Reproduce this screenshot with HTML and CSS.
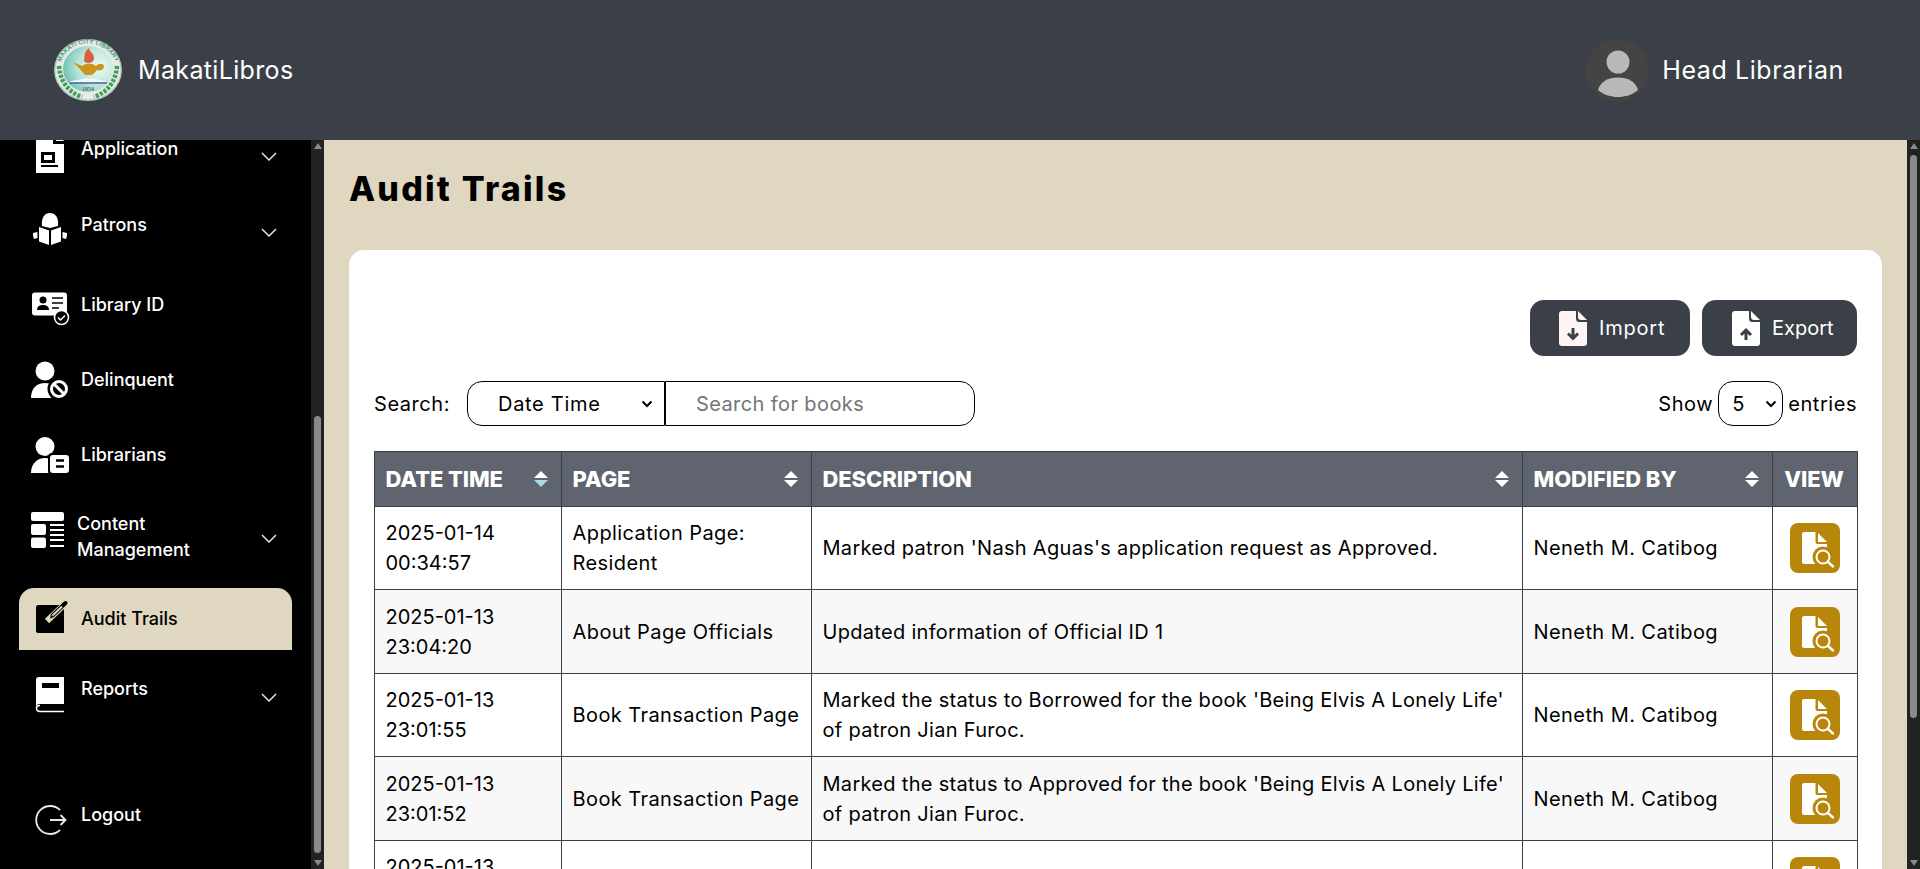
FILE: index.html
```html
<!DOCTYPE html>
<html lang="en">
<head>
<meta charset="utf-8">
<title>Audit Trails - MakatiLibros</title>
<link rel="stylesheet" href="styles.css">
</head>
<body>
<div class="app">
  <header class="topbar">
    <div class="brand">
      <svg class="logo" width="68" height="62" viewBox="0 0 68 62">
        <defs>
          <radialGradient id="logoFill" cx="0.72" cy="0.45" r="0.8">
            <stop offset="0" stop-color="#f2faf7"/>
            <stop offset="0.55" stop-color="#b6e2d8"/>
            <stop offset="1" stop-color="#5dbdaa"/>
          </radialGradient>
          <path id="logoArc" d="M9.800 45 A28.500 26.500 0 1 1 58.200 45"/>
        </defs>
        <ellipse cx="34" cy="31" rx="34" ry="31" fill="#b9c9bf"/>
        <ellipse cx="34" cy="31" rx="32.500" ry="29.500" fill="#e6ebe5"/>
        <text class="logo-ring"><textPath href="#logoArc" startOffset="50%" text-anchor="middle">MAKATI CITY LIBRARY</textPath></text>
        <g fill="none" stroke="#3e9f5a" stroke-width="4.500" stroke-dasharray="3 1.500">
          <path d="M5 27 C6 42 14 53 28 58"/>
          <path d="M63 27 C62 42 54 53 40 58"/>
        </g>
        <ellipse cx="34" cy="30" rx="25" ry="23" fill="url(#logoFill)"/>
        <path d="M35 9 C29 14 31 18 30 22 C33 26 40 24 40 19 C40 14 36 14 35 9Z" fill="#d9623a"/>
        <path d="M19 23 L28 27 C32 24 39 24 42 27 C45 24 50 24 50 28 C49 32 45 32 43 31 C41 34 38 36 37 36 H31 C29 34 27 31 25 29 C23 27 21 25 19 23Z" fill="#c9971f"/>
        <path d="M17 42 L34 39 L35 41 L36 39 L52 42 L53 43.500 H16Z" fill="#f3f6fb"/>
        <path d="M16 44 H53" stroke="#3f63a8" stroke-width="1.400"/>
        <text class="logo-year" x="34" y="52" text-anchor="middle">1954</text>
      </svg>
      <span class="brand-name">MakatiLibros</span>
    </div>
    <div class="user">
      <svg class="avatar" width="63" height="63" viewBox="0 0 63 63">
        <circle cx="31.500" cy="31.500" r="31.500" fill="#444444"/>
        <circle cx="32" cy="23" r="11.500" fill="#b9b9b9"/>
        <path d="M12 51 C14 43 22 38.500 32 38.500 C42 38.500 50 43 52 51 C46 56 39 58 32 58 C25 58 18 56 12 51Z" fill="#b9b9b9"/>
      </svg>
      <span class="user-name">Head Librarian</span>
    </div>
  </header>

  <div class="workspace">
    <aside class="sidebar">
      <nav class="nav">
        <a class="nav-item nav-tall nav-scrolled">
          <svg class="nav-icon" width="38" height="44" viewBox="0 0 38 44">
            <path fill="#fff" fill-rule="evenodd" d="M5 2 H22 V13 H33 V42 H5Z M10 21 V32 H24 V21Z M13 24 H21 V29 H13Z M10 34 V36 H27 V34Z"/>
            <path fill="#fff" d="M25 2 L33 10 H25Z"/>
          </svg>
          <span class="nav-label label-near">Application</span>
          <svg class="chevron" width="16" height="9" viewBox="0 0 16 9"><path d="M1 1 L8 8 L15 1"/></svg>
        </a>
        <a class="nav-item nav-tall">
          <svg class="nav-icon" width="38" height="44" viewBox="0 0 38 44">
            <path fill="#fff" d="M11 19 C10 10 14 6 19 6 C24 6 28 10 27 19 L19 21Z"/>
            <path fill="#fff" d="M8 20 L18 23.500 V38 L8 34.500Z M20 23.500 L30 20 V34.500 L20 38Z"/>
            <path fill="#fff" d="M2 26 L6.500 25 V31 L3 32 C2 30 2 28 2 26Z M31.500 25 L36 26 C36 28 36 30 35 32 L31.500 31Z"/>
          </svg>
          <span class="nav-label label-near">Patrons</span>
          <svg class="chevron" width="16" height="9" viewBox="0 0 16 9"><path d="M1 1 L8 8 L15 1"/></svg>
        </a>
        <a class="nav-item nav-tall">
          <svg class="nav-icon" width="38" height="44" viewBox="0 0 38 44">
            <rect x="1" y="9.500" width="35" height="23" rx="3" fill="#fff"/>
            <circle cx="12" cy="17" r="3.500" fill="#000"/>
            <path fill="#000" d="M6 27 C6 23 9 22 12 22 C15 22 18 23 18 27Z"/>
            <path stroke="#000" stroke-width="1.500" d="M21 15 H32 M21 20 H32 M21 25 H28"/>
            <circle cx="30.500" cy="34.500" r="7" fill="#000" stroke="#fff" stroke-width="1.500"/>
            <path fill="none" stroke="#fff" stroke-width="1.500" d="M27 34.500 L29.500 37 L34 32.500"/>
          </svg>
          <span class="nav-label">Library ID</span>
        </a>
        <a class="nav-item">
          <svg class="nav-icon" width="38" height="44" viewBox="0 0 38 44">
            <circle cx="14" cy="13" r="9.500" fill="#fff"/>
            <path fill="#fff" d="M0 40 C0 30 6 25 14 25 C20 25 25 28 27 32 L22 40Z"/>
            <circle cx="28" cy="31" r="11.500" fill="#000"/>
            <circle cx="28" cy="31" r="7.500" fill="none" stroke="#fff" stroke-width="3"/>
            <path stroke="#fff" stroke-width="3" d="M23 26 L33 36"/>
          </svg>
          <span class="nav-label">Delinquent</span>
        </a>
        <a class="nav-item nav-mid">
          <svg class="nav-icon" width="38" height="44" viewBox="0 0 38 44">
            <circle cx="14" cy="13.500" r="9.500" fill="#fff"/>
            <path fill="#fff" d="M0 40 C0 31 6 25 14 25 C18 25 20 26 20 28 V40Z"/>
            <rect x="17" y="20" width="21" height="22" rx="4" fill="#000"/>
            <rect x="19" y="22" width="19" height="18" rx="3" fill="#fff"/>
            <path stroke="#000" stroke-width="2.500" d="M25 27.500 H33 M25 33.500 H33"/>
          </svg>
          <span class="nav-label">Librarians</span>
        </a>
        <a class="nav-item nav-content">
          <svg class="nav-icon icon-up" width="38" height="44" viewBox="0 0 38 44">
            <rect x="0" y="4" width="33" height="9" rx="2" fill="#fff"/>
            <rect x="0" y="16" width="15" height="11" rx="2" fill="#fff"/>
            <rect x="0" y="29.500" width="15" height="10.500" rx="2" fill="#fff"/>
            <path stroke="#fff" stroke-width="2" d="M19 17 H33 M19 22 H33 M19 27 H33 M19 32 H33 M19 38 H33"/>
          </svg>
          <span class="nav-label label-wrap">Content Management</span>
          <svg class="chevron chevron-plain" width="16" height="9" viewBox="0 0 16 9"><path d="M1 1 L8 8 L15 1"/></svg>
        </a>
        <a class="nav-item nav-active">
          <svg class="nav-icon" width="38" height="44" viewBox="0 0 38 44">
            <path fill="#000" d="M7 8 H31 C32 8 33 9 33 10 V36 H7 C6 36 5 35 5 34 V10 C5 9 6 8 7 8Z"/>
            <path stroke="#dfd7bf" stroke-width="6" d="M16 24 L38 3"/>
            <path stroke="#000" stroke-width="4" stroke-linecap="round" d="M21.500 18.500 L34.500 6"/>
            <path stroke="#dfd7bf" stroke-width="2" d="M20.500 19.500 L31 9.500"/>
            <path stroke="#000" stroke-width="1.500" d="M19.500 21 L21.500 18.500"/>
          </svg>
          <span class="nav-label">Audit Trails</span>
        </a>
        <a class="nav-item nav-reports">
          <svg class="nav-icon" width="38" height="44" viewBox="0 0 38 44">
            <path fill="#fff" fill-rule="evenodd" d="M8 5 H33 V32 H9 C7 32 5 33 5 35 V8 C5 6 6 5 8 5Z M11 11 V16 H28 V11Z"/>
            <path fill="none" stroke="#fff" stroke-width="1.500" d="M33 39.500 H9 C7 39.500 5.500 38 5.500 36 C5.500 34.500 7 33.500 9 33.500"/>
          </svg>
          <span class="nav-label label-up">Reports</span>
          <svg class="chevron" width="16" height="9" viewBox="0 0 16 9"><path d="M1 1 L8 8 L15 1"/></svg>
        </a>
        <a class="nav-item nav-logout">
          <svg class="nav-icon" width="38" height="44" viewBox="0 0 38 44">
            <path fill="none" stroke="#e8e8e8" stroke-width="1.800" d="M29 12 A14 14 0 1 0 29 32"/>
            <path fill="none" stroke="#e8e8e8" stroke-width="1.800" d="M19 22 H34 M29.500 17 L34.500 22 L29.500 27"/>
          </svg>
          <span class="nav-label label-up">Logout</span>
        </a>
      </nav>
    </aside>
    <div class="scrollbar scrollbar-side">
      <span class="sb-up"></span>
      <span class="sb-thumb"></span>
      <span class="sb-down"></span>
    </div>

    <main class="main">
      <h1 class="page-title">Audit Trails</h1>
      <section class="card">
        <div class="actions">
          <button class="action-btn btn-import">
            <svg width="28" height="35" viewBox="0 0 28 35">
              <path fill="#fff5f5" d="M3 0 H17 V7 C17 10 18 11 21 11 H28 V32 C28 34 27 35 25 35 H3 C1 35 0 34 0 32 V3 C0 1 1 0 3 0Z"/>
              <path fill="#fff5f5" d="M19 0 L28 9 H22 C20 9 19 8 19 6Z"/>
              <path fill="none" stroke="#3b3f48" stroke-width="3" d="M14 17 V27 M9 22.500 L14 27.500 L19 22.500"/>
            </svg>
            <span>Import</span>
          </button>
          <button class="action-btn btn-export">
            <svg width="28" height="35" viewBox="0 0 28 35">
              <path fill="#fff" d="M3 0 H17 V7 C17 10 18 11 21 11 H28 V32 C28 34 27 35 25 35 H3 C1 35 0 34 0 32 V3 C0 1 1 0 3 0Z"/>
              <path fill="#fff" d="M19 0 L28 9 H22 C20 9 19 8 19 6Z"/>
              <path fill="none" stroke="#3b3f48" stroke-width="3" d="M14 29 V19 M9 24 L14 19 L19 24"/>
            </svg>
            <span>Export</span>
          </button>
        </div>

        <div class="controls">
          <div class="search">
            <label class="search-label">Search:</label>
            <select class="search-select"><option>Date Time</option></select>
            <input class="search-input" type="text" placeholder="Search for books">
          </div>
          <div class="entries">
            <span class="show-label">Show</span>
            <select class="entries-select"><option>5</option></select>
            <span class="entries-label">entries</span>
          </div>
        </div>

        <table class="audit">
          <colgroup>
            <col class="col-date"><col class="col-page"><col class="col-desc"><col class="col-mod"><col class="col-view">
          </colgroup>
          <thead>
            <tr>
              <th><div class="th-inner">DATE TIME<span class="sort sort-active"></span></div></th>
              <th><div class="th-inner">PAGE<span class="sort"></span></div></th>
              <th><div class="th-inner">DESCRIPTION<span class="sort"></span></div></th>
              <th><div class="th-inner">MODIFIED BY<span class="sort"></span></div></th>
              <th class="th-view">VIEW</th>
            </tr>
          </thead>
          <tbody>
            <tr>
              <td class="td-date">2025-01-14 00:34:57</td>
              <td>Application Page: Resident</td>
              <td class="td-desc">Marked patron 'Nash Aguas's application request as Approved.</td>
              <td>Neneth M. Catibog</td>
              <td class="td-view"><button class="view-btn"><svg width="50" height="50" viewBox="0 0 50 50"><use href="#viewIcon"/></svg></button></td>
            </tr>
            <tr>
              <td class="td-date">2025-01-13 23:04:20</td>
              <td>About Page Officials</td>
              <td class="td-desc">Updated information of Official ID 1</td>
              <td>Neneth M. Catibog</td>
              <td class="td-view"><button class="view-btn"><svg width="50" height="50" viewBox="0 0 50 50"><use href="#viewIcon"/></svg></button></td>
            </tr>
            <tr>
              <td class="td-date">2025-01-13 23:01:55</td>
              <td>Book Transaction Page</td>
              <td class="td-desc">Marked the status to Borrowed for the book 'Being Elvis A Lonely Life' of patron Jian Furoc.</td>
              <td>Neneth M. Catibog</td>
              <td class="td-view"><button class="view-btn"><svg width="50" height="50" viewBox="0 0 50 50"><use href="#viewIcon"/></svg></button></td>
            </tr>
            <tr>
              <td class="td-date">2025-01-13 23:01:52</td>
              <td>Book Transaction Page</td>
              <td class="td-desc">Marked the status to Approved for the book 'Being Elvis A Lonely Life' of patron Jian Furoc.</td>
              <td>Neneth M. Catibog</td>
              <td class="td-view"><button class="view-btn"><svg width="50" height="50" viewBox="0 0 50 50"><use href="#viewIcon"/></svg></button></td>
            </tr>
            <tr>
              <td class="td-date">2025-01-13<br>&nbsp;</td>
              <td></td>
              <td></td>
              <td></td>
              <td class="td-view"><button class="view-btn"><svg width="50" height="50" viewBox="0 0 50 50"><use href="#viewIcon"/></svg></button></td>
            </tr>
          </tbody>
        </table>
      </section>
    </main>
    <div class="scrollbar scrollbar-main">
      <span class="sb-up"></span>
      <span class="sb-thumb"></span>
      <span class="sb-down"></span>
    </div>
  </div>
</div>

<svg class="sprite" width="0" height="0">
  <symbol id="viewIcon" viewBox="0 0 50 50">
    <path fill="#fff" d="M12 11 C12 10 13 9 14 9 H25.500 V19 C25.500 20.500 26.500 21 28 21 H37 V41 H14 C13 41 12 40 12 39Z"/>
    <path fill="#fff" d="M28 10 L37 19 H28Z"/>
    <circle cx="33" cy="34" r="10.500" fill="#b8860b"/>
    <circle cx="33" cy="34" r="6.500" fill="#b8860b" stroke="#fff" stroke-width="2"/>
    <path stroke="#fff" stroke-width="2.400" stroke-linecap="round" d="M38 39 L43 43.500"/>
  </symbol>
</svg>
</body>
</html>
```
FILE: styles.css
```css
* { box-sizing: border-box; }
html, body { margin: 0; height: 100%; overflow: hidden; }
body { font-family: "Inter", "Noto Sans", sans-serif; color: #000; background: #dfd7bf; }
.sprite { position: absolute; }

.app { display: flex; flex-direction: column; height: 100vh; }

/* top bar */
.topbar { flex: 0 0 140px; display: flex; align-items: center; justify-content: space-between; background: #3b3f48; color: #fff; padding: 0 76px 0 54px; }
.brand, .user { display: flex; align-items: center; }
.logo { display: block; margin-right: 16px; }
.logo-ring { font: 700 6px "Liberation Sans", sans-serif; fill: #3f9a76; letter-spacing: 0.2px; }
.logo-year { font: 400 6px "Liberation Serif", serif; fill: #444; }
.brand-name { font-size: 25px; letter-spacing: 0.35px; }
.avatar { display: block; margin-right: 13px; }
.user-name { font-size: 25px; letter-spacing: 0.6px; }

/* workspace */
.workspace { flex: 1; min-height: 0; display: flex; }
.sidebar { flex: 0 0 311px; background: #000; overflow: hidden; display: flex; }
.nav { flex: 1; display: flex; flex-direction: column; }
.nav-item { display: flex; align-items: center; height: 74px; margin-left: 19px; width: 273px; padding: 0 15px 0 12px; color: #fff; flex: none; }
.nav-tall { height: 76px; }
.nav-mid { height: 75px; }
.nav-scrolled { margin-top: -25px; }
.nav-content { height: 90px; margin-bottom: 6px; }
.nav-active { height: 62px; background: #dfd7bf; color: #000; border-radius: 15px 15px 0 0; margin-bottom: 7px; }
.nav-logout { margin-top: auto; margin-bottom: 12px; }
.nav-icon { display: block; flex: none; margin-right: 12px; overflow: visible; }
.icon-up { margin-top: -15px; margin-right: 8px; }
.nav-label { font-size: 18px; font-weight: 500; line-height: 26px; }
.label-up { margin-bottom: 11px; }
.label-near { margin-bottom: 9px; }
.label-wrap { width: 150px; }
.chevron { margin-left: auto; margin-top: 6px; flex: none; }
.chevron-plain { margin-top: 2px; }
.chevron path { fill: none; stroke: #e2e2e2; stroke-width: 1.500; }

/* fake scrollbars */
.scrollbar { flex: 0 0 13px; background: #222222; display: flex; flex-direction: column; align-items: center; }
.sb-up, .sb-down { display: block; width: 0; height: 0; border-left: 4px solid transparent; border-right: 4px solid transparent; flex: none; }
.sb-up { border-bottom: 6px solid #8a8a8a; margin-top: 3px; }
.sb-down { border-top: 6px solid #8a8a8a; margin-top: auto; margin-bottom: 3px; }
.sb-thumb { display: block; width: 7px; background: #8a8a8a; border-radius: 4px; flex: none; }
.scrollbar-side .sb-thumb { margin-top: 267px; height: 437px; }
.scrollbar-main .sb-thumb { margin-top: 6px; height: 563px; }

/* main */
.main { flex: 1; min-width: 0; overflow: hidden; padding: 0 25px; background: #dfd7bf; }
.page-title { margin: 0; height: 110px; padding-top: 25px; font-size: 34px; line-height: 48px; font-weight: 800; letter-spacing: 2.2px; }
.card { background: #fff; border-radius: 15px 15px 0 0; padding: 50px 25px 0; }

.actions { display: flex; justify-content: flex-end; gap: 12px; margin-bottom: 25px; }
.action-btn { height: 56px; border: 0; border-radius: 14px; background: #3b3f48; color: #fff; display: flex; align-items: center; gap: 12px; font: 400 20px "Inter", sans-serif; padding: 0 0 0 29px; }
.btn-import { width: 160px; letter-spacing: 0.8px; }
.btn-export { width: 155px; padding-left: 30px; letter-spacing: 0; }

.controls { display: flex; justify-content: space-between; align-items: center; height: 45px; margin-bottom: 25px; font-size: 20px; letter-spacing: 0.55px; }
.search, .entries { display: flex; align-items: center; }
.search-label { width: 93px; }
.search-select, .entries-select { appearance: none; background-color: #fff; background-repeat: no-repeat; background-image: url("data:image/svg+xml,%3Csvg xmlns='http://www.w3.org/2000/svg' width='12' height='8' viewBox='0 0 12 8'%3E%3Cpath d='M1.500 1.500 L6 6 L10.500 1.500' fill='none' stroke='%23000' stroke-width='2'/%3E%3C/svg%3E"); font: 400 20px "Inter", sans-serif; color: #000; height: 45px; border: 1px solid #000; }
.search-select { width: 198px; border-radius: 15px 0 0 15px; padding-left: 30px; letter-spacing: 0.7px; background-position: right 11px center; }
.search-input { width: 310px; height: 45px; border: 1px solid #000; border-radius: 0 15px 15px 0; background: #fff; padding: 0 30px; font: 400 20px "Inter", sans-serif; letter-spacing: 0.4px; outline: 0; }
.search-input::placeholder { color: #757575; }
.show-label { margin-right: 5px; }
.entries-select { width: 65px; border-radius: 15px; padding-left: 13px; background-position: right 5px center; }
.entries-label { margin-left: 5px; }

/* table */
.audit { width: 1483px; table-layout: fixed; border-collapse: collapse; font-size: 20px; line-height: 30px; }
.col-date { width: 187px; }
.col-page { width: 250px; }
.col-desc { width: 711px; }
.col-mod { width: 250px; }
.col-view { width: 85px; }
.audit th, .audit td { border: 1px solid #3b3f48; padding: 0 10px 0 10.500px; text-align: left; }
.audit th { height: 55px; background: #5f646e; color: #fff; font-size: 22px; font-weight: 800; letter-spacing: -0.1px; }
.th-inner { display: flex; align-items: center; justify-content: space-between; }
.audit th.th-view { text-align: center; padding: 0 2px 0 0; }
.audit td { height: 83px; letter-spacing: 0.42px; vertical-align: middle; }
.audit td.td-date { letter-spacing: 0; }
.audit td.td-desc { letter-spacing: 0.3px; }
.audit tbody tr:nth-child(even) td { height: 84px; background: #f8f8f9; }
.audit td.td-view { padding: 0 0 0 17px; }

.sort { display: flex; flex-direction: column; gap: 2px; width: 14px; flex: none; margin-right: 3px; }
.sort::before, .sort::after { content: ""; display: block; width: 0; height: 0; border-left: 7px solid transparent; border-right: 7px solid transparent; }
.sort::before { border-bottom: 7.500px solid #fff; }
.sort::after { border-top: 7.500px solid #fff; }
.sort-active::after { border-top-color: #add8e6; }

.view-btn { display: block; width: 50px; height: 50px; padding: 0; border: 0; border-radius: 8px; background: #b8860b; }
.view-btn svg { display: block; }
```
